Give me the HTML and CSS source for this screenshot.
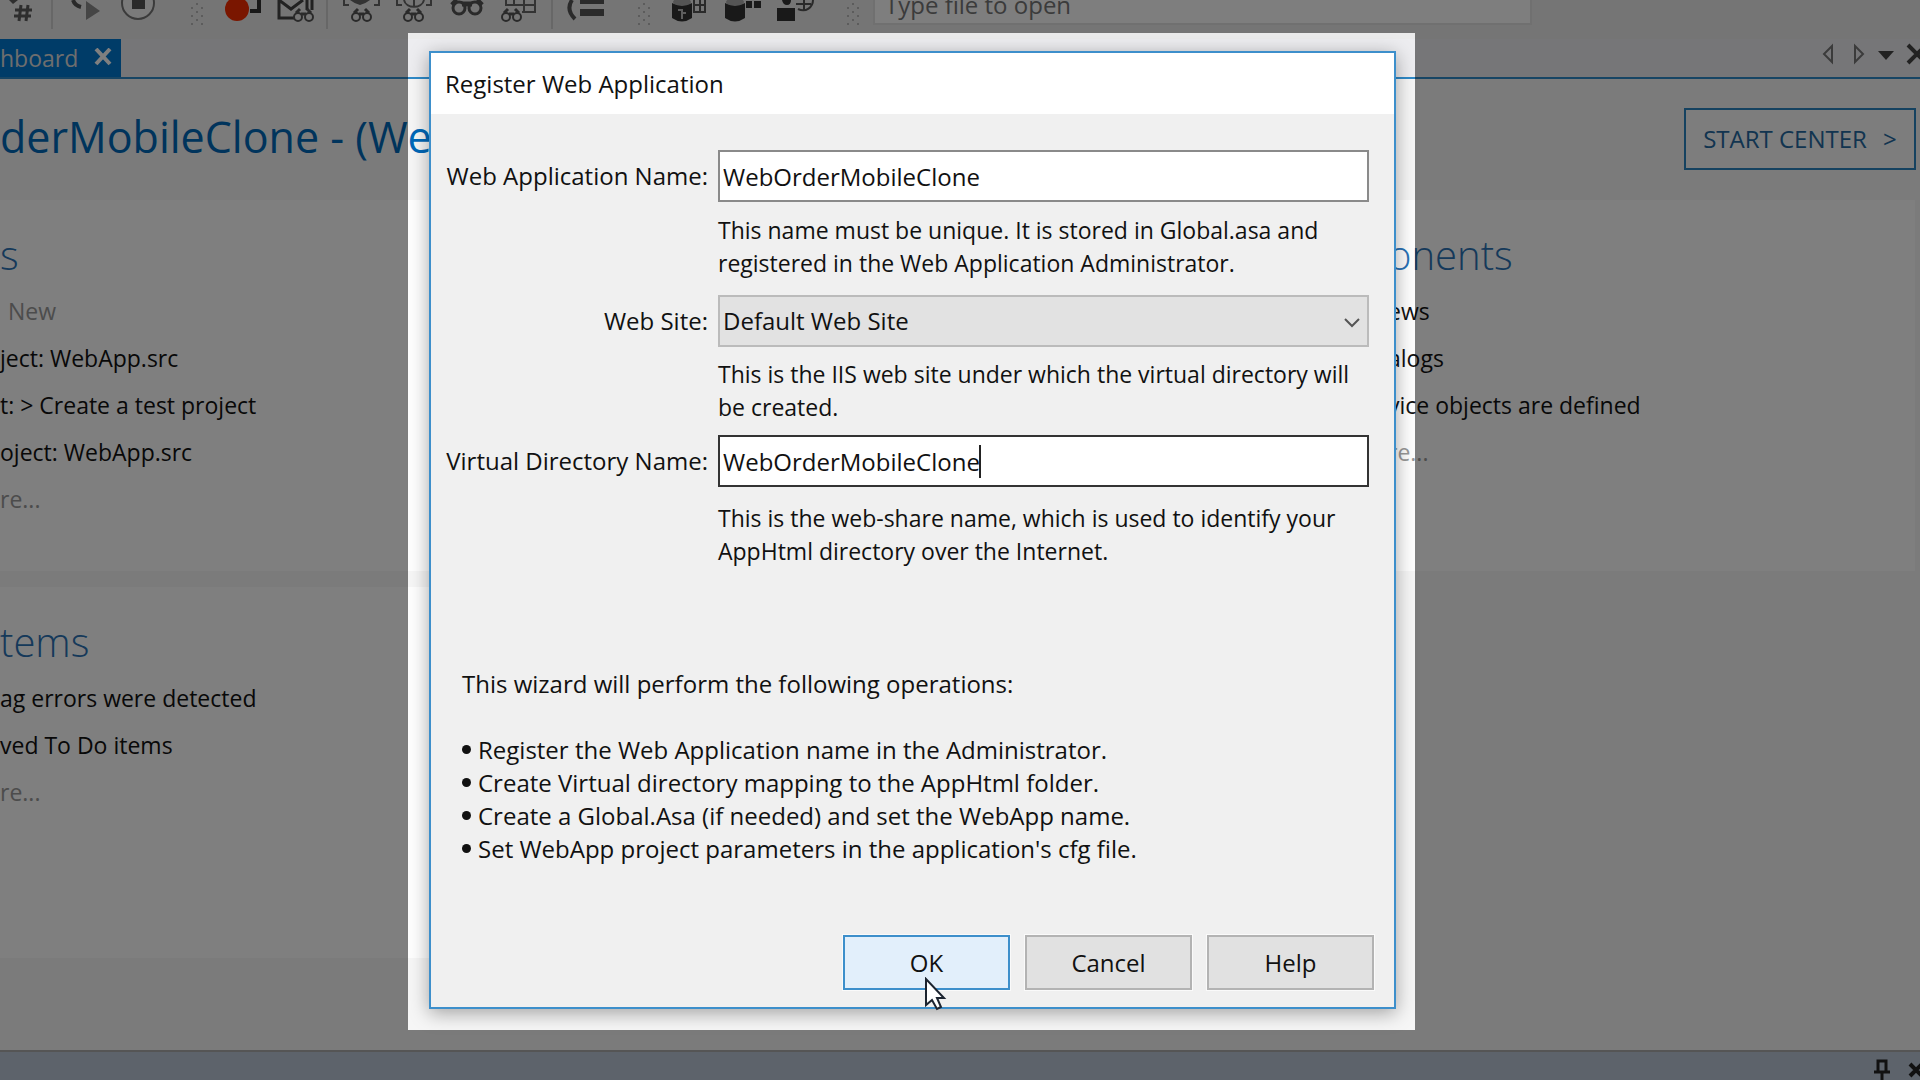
FILE: index.html
```html
<!DOCTYPE html>
<html lang="en">
<head>
    <meta charset="UTF-8">
    <title>Studio Dashboard</title>
    <link rel="stylesheet" href="styles.css">
</head>
<body>

    <div class="studio">
        <div class="toolbar">
            <svg class="toolbar-icons" width="860" height="33" viewBox="0 0 860 33">
                <!-- bookmark number, step, stop -->
                <path d="M21 5L19 21M28 5L26 21M15 10H32M14 16H31" fill="none" stroke="#5c5c5c" stroke-width="3"/>
                <path d="M9 0h9l-5 4z" fill="#5c5c5c"/>
                <path d="M73 0c1 3 4 6 8 7" fill="none" stroke="#555" stroke-width="4"/>
                <path d="M86 1v19l14-9z" fill="#8a8a8a"/>
                <circle cx="138" cy="3" r="16" fill="#f4f4f4" stroke="#777" stroke-width="2"/>
                <rect x="132" y="0" width="13" height="9" fill="#555"/>
                <path d="M52 0v29M327 0v29M552 0v29" stroke="#cfcfcf" stroke-width="2"/>
                <!-- grips -->
                <g fill="#b8b8b8">
                    <path id="grip" d="M196 3h2v2h-2zM191 7h2v2h-2zM201 7h2v2h-2zM196 11h2v2h-2zM191 15h2v2h-2zM201 15h2v2h-2zM196 19h2v2h-2zM191 23h2v2h-2zM201 23h2v2h-2z"/>
                    <use href="#grip" x="447"/>
                    <use href="#grip" x="656"/>
                </g>
                <!-- record and message find -->
                <circle cx="237" cy="9" r="12" fill="#f42c00"/>
                <path d="M259 0v11h-9" fill="none" stroke="#333" stroke-width="4"/>
                <path d="M279 0v18h15M279 0l12 9 12-9M307 0v10M312 0v10" fill="none" stroke="#444" stroke-width="3"/>
                <!-- binoculars -->
                <g id="find" fill="none" stroke="#555" stroke-width="2">
                    <circle cx="298" cy="17" r="4"/>
                    <circle cx="309" cy="17" r="4"/>
                    <path d="M296 13l4-4M311 13l-4-4M301 14h5" stroke-width="3"/>
                </g>
                <use href="#find" x="58"/>
                <use href="#find" x="110"/>
                <use href="#find" x="208"/>
                <g fill="none" stroke="#666" stroke-width="2">
                    <path d="M344 0v5h5M379 0v5h-5M397 0v5h5M431 0v5h-5M404 0c2 9 18 9 20 0M414 0v7"/>
                    <path d="M506 0v6M514 0v6M522 12h13V0M506 5h29M524 0v12"/>
                </g>
                <path d="M350 0h20q-5 4-10 5-5-1-10-5z" fill="#666"/>
                <g fill="none" stroke="#555" stroke-width="3">
                    <circle cx="459" cy="8" r="6"/>
                    <circle cx="475" cy="8" r="6"/>
                    <path d="M452 5l5-5M482 5l-5-5M462 4h10" stroke-width="5"/>
                </g>
                <path d="M572 0c-4 6-4 12 3 19" fill="none" stroke="#555" stroke-width="4"/>
                <path d="M580 0h24v4h-24zM580 9h24v7h-24z" fill="#555"/>
                <!-- databases, user -->
                <g fill="#aaa">
                    <ellipse cx="682" cy="2" rx="9" ry="4"/>
                    <ellipse cx="735" cy="2" rx="9" ry="4"/>
                </g>
                <g fill="#333">
                    <path d="M672 3q10 6 20 0v15q-10 7-20 0zM725 3q10 6 20 0v15q-10 7-20 0zM746 1h6v7h-6zM754 1h7v7h-7z"/>
                    <path d="M777 8h18v13h-18zM782 0h9q0 5-4 5t-5-5z"/>
                </g>
                <path d="M678 10h4v3h4M682 19v-5" fill="none" stroke="#bbb" stroke-width="2"/>
                <path d="M694 0v12h11V0M694 5h11M700 0v12M798 9c8 4 15-2 15-9M796 4h15M804 0v10" fill="none" stroke="#555" stroke-width="2"/>
            </svg>
            <input class="file-search" type="text" placeholder="Type file to open" aria-label="Type file to open">
        </div>

        <div class="tabs">
            <div class="tab">hboard
                <button class="tab-close" aria-label="Close tab">
                    <svg width="18" height="18" viewBox="0 0 18 18"><path d="M2 1l14 15M16 1L2 16"/></svg>
                </button>
            </div>
            <svg class="tab-tools" width="98" height="22" viewBox="0 0 98 22">
                <path d="M10 3v16L2 11zM33 3v16l8-8z" fill="none" stroke="#777" stroke-width="2"/>
                <path d="M56 8h16l-8 9z" fill="#444"/>
                <path d="M86 2l18 18M104 2L86 20" stroke="#444" stroke-width="4"/>
            </svg>
        </div>

        <div class="header">
            <h1>derMobileClone - (We</h1>
            <button class="start-center">START CENTER <span>&gt;</span></button>
        </div>

        <div class="cards">
            <section class="card">
                <h2>s</h2>
                <ul>
                    <li class="muted new">New</li>
                    <li>ject: WebApp.src</li>
                    <li>t: &gt; Create a test project</li>
                    <li>oject: WebApp.src</li>
                    <li class="muted">re...</li>
                </ul>
            </section>
            <section class="card card-right">
                <h2>onents</h2>
                <ul>
                    <li>ews</li>
                    <li>alogs</li>
                    <li>vice objects are defined</li>
                    <li class="muted">re...</li>
                </ul>
            </section>
            <section class="card">
                <h2>tems</h2>
                <ul>
                    <li>ag errors were detected</li>
                    <li>ved To Do items</li>
                    <li class="muted">re...</li>
                </ul>
            </section>
        </div>

        <div class="panel-bar">
            <svg width="48" height="24" viewBox="0 0 48 24">
                <path d="M6 15V5h8v10M2 16h16M10 16v8" fill="none" stroke="#222" stroke-width="3"/>
                <path d="M38 8l12 12M50 8L38 20" stroke="#222" stroke-width="4"/>
            </svg>
        </div>
    </div>

    <div class="spotlight">
        <form class="dialog" role="dialog" aria-labelledby="dialogTitle">
            <div class="dialog-title" id="dialogTitle">Register Web Application</div>

            <div class="fields">
                <label for="appName">Web Application Name:</label>
                <input type="text" id="appName" value="WebOrderMobileClone">
                <p>This name must be unique. It is stored in Global.asa and<br>registered in the Web Application Administrator.</p>

                <label for="webSite">Web Site:</label>
                <div class="select-box">
                    <select id="webSite">
                        <option>Default Web Site</option>
                    </select>
                    <svg width="16" height="10" viewBox="0 0 16 10"><path d="M1 1l7 7 7-7"/></svg>
                </div>
                <p class="tight">This is the IIS web site under which the virtual directory will<br>be created.</p>

                <label for="dirName">Virtual Directory Name:</label>
                <div class="input-box">
                    <input type="text" id="dirName" class="focused" value="WebOrderMobileClone">
                    <span class="caret"></span>
                </div>
                <p>This is the web-share name, which is used to identify your<br>AppHtml directory over the Internet.</p>
            </div>

            <div class="operations">
                <p>This wizard will perform the following operations:</p>
                <ul>
                    <li>Register the Web Application name in the Administrator.</li>
                    <li>Create Virtual directory mapping to the AppHtml folder.</li>
                    <li>Create a Global.Asa (if needed) and set the WebApp name.</li>
                    <li>Set WebApp project parameters in the application's cfg file.</li>
                </ul>
            </div>

            <div class="buttons">
                <button type="button" class="ok">OK</button>
                <button type="button">Cancel</button>
                <button type="button">Help</button>
            </div>
        </form>
        <svg class="cursor" width="22" height="34" viewBox="0 0 22 34">
            <path d="M1 2v26l6-5 5 9 4-2-4-9h7z" fill="#fff" stroke="#1c2430" stroke-width="2"/>
        </svg>
    </div>

</body>
</html>
```
FILE: styles.css
```css
* {
    box-sizing: border-box;
}

body {
    margin: 0;
    height: 100vh;
    overflow: hidden;
    position: relative;
    font-family: "Open Sans", "Noto Sans", sans-serif;
    font-size: 24px;
    line-height: 33px;
    color: #111;
}

h1, h2, p, ul {
    margin: 0;
    padding: 0;
    font-weight: normal;
}

ul {
    list-style: none;
}

button, input, select {
    font: inherit;
    color: inherit;
    border-radius: 0;
}

.studio {
    height: 100%;
    display: flex;
    flex-direction: column;
    background-color: #f6f6f6;
    white-space: nowrap;
}

/* toolbar */
.toolbar {
    display: flex;
    height: 39px;
    background-color: #ebebeb;
}

.toolbar-icons {
    margin-right: 13px;
}

.file-search {
    width: 659px;
    height: 42px;
    margin-top: -17px;
    padding: 0 10px;
    border: 2px solid #e0e0e0;
    background-color: #fcfcfc;
}

.file-search::placeholder {
    color: #777;
    opacity: 1;
}

/* document tabs */
.tabs {
    display: flex;
    justify-content: space-between;
    height: 40px;
    background-color: #ededf0;
    border-bottom: 2px solid #2f8ac8;
}

.tab {
    display: flex;
    align-items: center;
    gap: 16px;
    width: 121px;
    background-color: #0078d0;
    font-size: 23px;
    color: #ddd;
}

.tab-close {
    display: flex;
    padding: 0 0 3px;
    border: none;
    background: none;
}

.tab-close path {
    stroke: #fff;
    stroke-width: 4;
}

.tab-tools {
    margin-top: 4px;
}

/* dashboard */
.header {
    display: flex;
    justify-content: space-between;
    align-items: center;
    height: 121px;
    padding: 0 4px 2px 0;
}

.header h1 {
    padding-bottom: 3px;
    font-size: 43px;
    line-height: 60px;
    color: #0068b8;
}

.start-center {
    width: 232px;
    height: 62px;
    padding: 0;
    border: 2px solid #2a85c0;
    background-color: #fafafa;
    color: #2469a0;
}

.start-center span {
    margin-left: 10px;
}

.cards {
    flex: 1;
    display: grid;
    grid-template-columns: 1380px 1fr;
    grid-template-rows: 371px 371px;
    row-gap: 16px;
    padding-right: 5px;
}

.card {
    padding-top: 31px;
    background-color: #fefefe;
}

.card h2 {
    margin-bottom: 10px;
    font-size: 40px;
    font-weight: 300;
    line-height: 47px;
    color: #2b72b5;
}

.card li {
    font-size: 23px;
    line-height: 47px;
}

.card-right {
    padding-left: 8px;
}

.card .muted {
    color: #999;
}

.new {
    padding-left: 8px;
}

.panel-bar {
    display: flex;
    justify-content: flex-end;
    align-items: flex-end;
    height: 30px;
    border-top: 2px solid #aaa;
    background-color: #bac6d6;
}

/* the area round the dialog stays bright, the rest is dimmed */
.spotlight {
    position: absolute;
    top: 33px;
    left: 408px;
    padding: 18px 19px 21px 21px;
    box-shadow: 0 0 0 2000px rgba(0, 0, 0, 0.5);
}

.dialog {
    width: 967px;
    border: 2px solid #3d8fcb;
    background-color: #f0f0f0;
    box-shadow: 0 4px 18px rgba(0, 0, 0, 0.35);
}

.dialog-title {
    padding: 14px;
    background-color: #fff;
}

.fields {
    display: grid;
    grid-template-columns: 277px 651px;
    column-gap: 10px;
    padding-top: 36px;
}

.fields label {
    text-align: right;
    line-height: 52px;
    white-space: nowrap;
}

.fields input,
.fields select {
    display: block;
    width: 100%;
    height: 52px;
    padding: 0 3px;
    border: 2px solid #8a8a8a;
    background-color: #fff;
    outline: none;
}

.fields .focused {
    border-color: #333;
}

.fields p {
    grid-column: 2;
    margin: 12px 0 15px;
    font-size: 23px;
    white-space: nowrap;
}

.fields .tight {
    margin: 11px 0;
}

.fields p:last-child {
    margin-top: 15px;
}

.select-box,
.input-box {
    position: relative;
}

.caret {
    position: absolute;
    top: 10px;
    left: 261px;
    width: 2px;
    height: 33px;
    background-color: #222;
}

.fields select {
    appearance: none;
    padding-bottom: 2px;
    border-color: #bbb;
    background-color: #e2e2e2;
}

.select-box svg {
    position: absolute;
    top: 23px;
    right: 9px;
}

.select-box path {
    fill: none;
    stroke: #555;
    stroke-width: 2;
}

.operations {
    padding: 84px 31px 0;
}

.operations ul {
    margin-top: 33px;
}

.operations li {
    display: flex;
    align-items: center;
    gap: 7px;
}

.operations li::before {
    content: "";
    width: 9px;
    height: 9px;
    border-radius: 50%;
    background-color: #111;
}

.buttons {
    display: flex;
    justify-content: flex-end;
    gap: 15px;
    padding: 70px 20px 17px;
}

.buttons button {
    width: 167px;
    height: 55px;
    padding: 0;
    border: 2px solid #b3b3b3;
    background-color: #e1e1e1;
    box-shadow: 0 0 0 1px #fafafa;
}

.buttons .ok {
    border-color: #3d8fcb;
    background-color: #e2effb;
}

.cursor {
    position: absolute;
    left: 517px;
    bottom: 19px;
}
```
